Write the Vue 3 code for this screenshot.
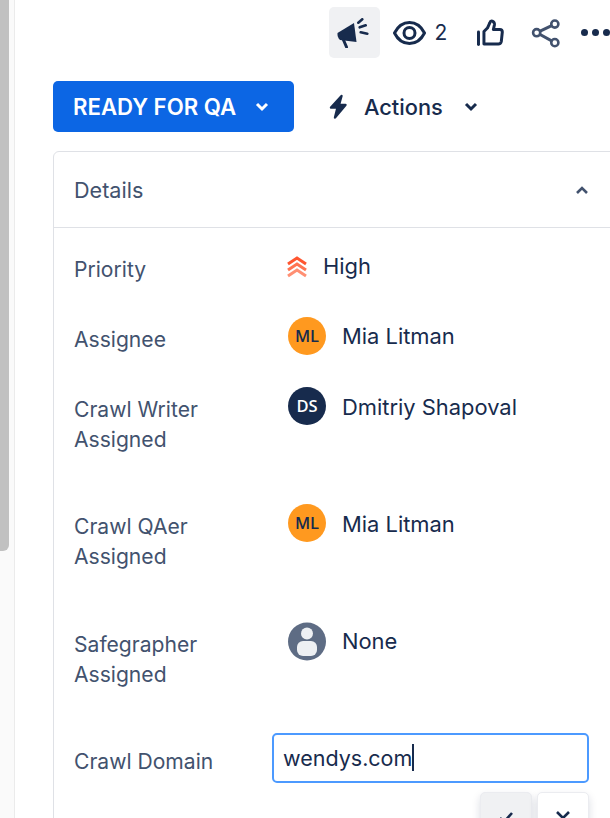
<template>
  <div class="page">
    <div class="scroller">
      <div class="thumb"></div>
    </div>
    <div class="main">
      <div class="top-bar">
        <button class="icon-btn active">
          <svg width="34" height="30" viewBox="0 0 34 30">
            <path d="M0.5 15 L17 5 L19.5 24 L3 22 Q0 19 0.5 15Z" fill="#172b4d" />
            <path d="M6.5 22 L9.5 29" stroke="#172b4d" stroke-width="3" stroke-linecap="round" fill="none" />
            <path d="M21.3 4.7 L25.3 1.3 M22.7 9.3 L28.7 7.3 M23.7 14.3 L30.3 15.7" stroke="#172b4d" stroke-width="2.6" stroke-linecap="round" fill="none" />
          </svg>
        </button>
        <div class="watchers">
          <svg width="33" height="24" viewBox="0 0 33 24">
            <path d="M1.5 12 C5 5 10 1.5 16.5 1.5 S28 5 31.5 12 C28 19 23 22.5 16.5 22.5 S5 19 1.5 12Z" fill="none" stroke="#172b4d" stroke-width="3" />
            <circle cx="16.5" cy="12" r="5.5" fill="none" stroke="#172b4d" stroke-width="3" />
          </svg>
          <span>2</span>
        </div>
        <svg class="thumb-icon" width="27" height="27" viewBox="0 0 27 27">
          <path d="M1.5 13 V25.5" stroke="#172b4d" stroke-width="3" stroke-linecap="round" fill="none" />
          <path d="M7 12.5 L10.5 9 L13 3.5 Q13.5 1.5 15.5 2 Q18 3 17.5 6 L16.5 10.5 H23 Q25.5 10.5 25.5 13 L24.5 22.5 Q24 25 21.5 25 H7Z" fill="none" stroke="#172b4d" stroke-width="3" stroke-linejoin="round" />
        </svg>
        <svg class="share-icon" width="30" height="30" viewBox="0 0 30 30">
          <path d="M6 14.7 L24 6 M6 14.7 L24 24.7" stroke="#42526e" stroke-width="3" fill="none" />
          <circle cx="5.7" cy="14.7" r="3.6" fill="#fff" stroke="#42526e" stroke-width="2.6" />
          <circle cx="24" cy="6" r="3.6" fill="#fff" stroke="#42526e" stroke-width="2.6" />
          <circle cx="24" cy="24.7" r="3.6" fill="#fff" stroke="#42526e" stroke-width="2.6" />
        </svg>
        <div class="dots"><i></i><i></i><i></i></div>
      </div>

      <div class="action-bar">
        <button class="status-btn">
          <span>READY FOR QA</span>
          <svg width="14" height="10" viewBox="0 0 14 10"><path d="M2 2 L7 7 L12 2" fill="none" stroke="#fff" stroke-width="3" /></svg>
        </button>
        <div class="actions">
          <svg width="20" height="26" viewBox="0 0 20 26">
            <path d="M13.5 2 L3 13.5 H9.5 L7 23.5 L17.5 11 H11Z" fill="#172b4d" stroke="#172b4d" stroke-width="2.4" stroke-linejoin="round" stroke-linecap="round" />
          </svg>
          <span>Actions</span>
          <svg width="14" height="10" viewBox="0 0 14 10"><path d="M2 2 L7 7 L12 2" fill="none" stroke="#172b4d" stroke-width="3" /></svg>
        </div>
      </div>

      <section class="card">
        <header class="card-head">
          <span>Details</span>
          <svg width="14" height="10" viewBox="0 0 14 10"><path d="M2 8 L7 3 L12 8" fill="none" stroke="#42526e" stroke-width="2.6" /></svg>
        </header>
        <div class="rows">
          <div v-for="row in rows" :key="row.label" class="row" :class="row.cls">
            <div class="label">{{ row.label }}</div>
            <div class="value">
              <template v-if="row.type === 'priority'">
                <svg class="prio" width="22" height="24" viewBox="0 0 22 24">
                  <path d="M2 9 L11 3 L20 9" fill="none" stroke="#ff5630" stroke-width="3" />
                  <path d="M2 15 L11 9 L20 15" fill="none" stroke="#ff7452" stroke-width="3" />
                  <path d="M2 21 L11 15 L20 21" fill="none" stroke="#ff8f73" stroke-width="3" />
                </svg>
                <span>{{ row.value }}</span>
              </template>
              <template v-else-if="row.type === 'user'">
                <span class="avatar" :class="row.color">{{ row.initials }}</span>
                <span>{{ row.value }}</span>
              </template>
              <template v-else-if="row.type === 'none'">
                <svg class="avatar-svg" width="38" height="39" viewBox="0 0 38 39">
                  <circle cx="19" cy="19.5" r="19" fill="#5e6c84" />
                  <circle cx="19" cy="11.5" r="6" fill="#eef0f3" />
                  <rect x="9" y="19" width="20" height="15" rx="6" fill="#eef0f3" />
                </svg>
                <span>{{ row.value }}</span>
              </template>
              <div v-else class="edit-wrap">
                <div class="input">wendys.com<i class="caret"></i></div>
                <div class="edit-btns">
                  <button class="mini confirm">
                    <svg width="16" height="14" viewBox="0 0 16 14"><path d="M2 8 L6 12 L14 3" fill="none" stroke="#172b4d" stroke-width="2.6" /></svg>
                  </button>
                  <button class="mini">
                    <svg width="16" height="16" viewBox="0 0 16 16"><path d="M2 2 L14 14 M14 2 L2 14" fill="none" stroke="#172b4d" stroke-width="2.6" /></svg>
                  </button>
                </div>
              </div>
            </div>
          </div>
        </div>
      </section>
    </div>
  </div>
</template>

<script setup>
const rows = [
  { label: 'Priority', type: 'priority', value: 'High', cls: 'r-priority' },
  { label: 'Assignee', type: 'user', value: 'Mia Litman', initials: 'ML', color: 'orange', cls: 'r-assignee' },
  { label: 'Crawl Writer Assigned', type: 'user', value: 'Dmitriy Shapoval', initials: 'DS', color: 'navy', cls: 'r-two' },
  { label: 'Crawl QAer Assigned', type: 'user', value: 'Mia Litman', initials: 'ML', color: 'orange', cls: 'r-two' },
  { label: 'Safegrapher Assigned', type: 'none', value: 'None', cls: 'r-two' },
  { label: 'Crawl Domain', type: 'edit', cls: 'r-edit' }
]
</script>

<style>
html, body { background: #fff; overflow: hidden; }
</style>

<style scoped>
.page {
  display: flex;
  width: 610px;
  height: 818px;
  overflow: hidden;
  font-family: Inter, "Liberation Sans", sans-serif;
  color: #172b4d;
  background: #fff;
}

.scroller {
  flex: none;
  width: 9px;
  padding-right: 5px;
  background: #fafafa;
  border-right: 1px solid #ebebeb;
}

.thumb {
  width: 9px;
  height: 551px;
  background: #c1c1c1;
  border-radius: 0 0 6px 0;
}

.main {
  flex: none;
  width: 557px;
  margin-left: 38px;
}

.top-bar {
  display: flex;
  align-items: center;
  height: 51px;
  margin-top: 7px;
  padding-left: 276px;
}

.icon-btn {
  display: flex;
  align-items: center;
  justify-content: center;
  width: 51px;
  height: 51px;
  padding: 0;
  border: none;
  border-radius: 5px;
  background: #f0f1f3;
}

.watchers {
  display: flex;
  align-items: center;
  gap: 9px;
  margin-left: 13px;
  font-size: 21px;
}

.thumb-icon { margin-left: 30px; }
.share-icon { margin-left: 27px; }

.dots {
  display: flex;
  gap: 4px;
  margin-left: 20px;
}

.dots i {
  flex: none;
  width: 7px;
  height: 7px;
  border-radius: 50%;
  background: #172b4d;
}

.action-bar {
  display: flex;
  align-items: center;
  margin-top: 23px;
}

.status-btn {
  display: flex;
  align-items: center;
  gap: 19px;
  width: 241px;
  height: 51px;
  padding: 0 0 0 20px;
  border: none;
  border-radius: 5px;
  background: #0c66e4;
  color: #fff;
  font-family: inherit;
  font-size: 22.2px;
  font-weight: 600;
}

.actions {
  display: flex;
  align-items: center;
  margin-left: 34px;
  font-size: 21.8px;
  font-weight: 500;
}

.actions span { margin: 0 21px 0 16px; }

.card {
  width: 600px;
  min-height: 720px;
  margin-top: 19px;
  border: 1px solid #dfe1e6;
  border-radius: 6px;
}

.card-head {
  display: flex;
  align-items: center;
  justify-content: space-between;
  width: 515px;
  height: 75px;
  padding: 0 65px 0 20px;
  border-bottom: 1px solid #dfe1e6;
  color: #42526e;
  font-size: 21.6px;
}

.rows { padding: 27px 0 0 20px; }

.row {
  display: grid;
  grid-template-columns: 214px 1fr;
  font-size: 21.1px;
}

.label {
  width: 150px;
  color: #42526e;
  line-height: 30px;
}

.value {
  display: flex;
  align-items: flex-start;
  gap: 16px;
  line-height: 30px;
  font-size: 21.9px;
}

.r-priority { height: 70px; }
.r-assignee { height: 70px; }
.r-two { height: 117.33px; }

.r-priority .value { margin-top: -1px; }
.r-priority .prio { margin: 1px -1px 0 -2px; }
.r-priority .value > span { margin-top: -3px; }

.avatar {
  display: flex;
  align-items: center;
  justify-content: center;
  flex: none;
  width: 38px;
  height: 38px;
  margin-top: -8px;
  border-radius: 50%;
  font-family: "Open Sans", sans-serif;
  font-size: 16.5px;
  font-weight: 600;
}

.avatar.orange { background: #ff991f; color: #172b4d; }
.avatar.navy { background: #172b4d; color: #fff; }

.r-assignee .avatar + span,
.avatar-svg + span { margin-top: -4px; }

.r-two .avatar + span { margin-top: -3px; }

.avatar-svg { flex: none; margin-top: -8px; }

.edit-wrap {
  margin: -14px 0 0 -16px;
  position: relative;
}

.input {
  display: flex;
  align-items: center;
  box-sizing: border-box;
  width: 317px;
  height: 50px;
  padding-left: 9px;
  border: 2px solid #4c9aff;
  border-radius: 5px;
  font-size: 21.5px;
}

.caret {
  width: 2px;
  height: 27px;
  background: #172b4d;
}

.edit-btns {
  position: absolute;
  top: 59px;
  right: 0;
  display: flex;
  gap: 5px;
}

.mini {
  display: flex;
  justify-content: center;
  padding: 17px 0 0;
  width: 52px;
  height: 52px;
  border: 1px solid #ebecf0;
  border-radius: 5px;
  background: #fff;
  box-shadow: 0 4px 8px rgba(9, 30, 66, 0.15);
}

.mini.confirm { background: #f0f1f3; }
</style>
